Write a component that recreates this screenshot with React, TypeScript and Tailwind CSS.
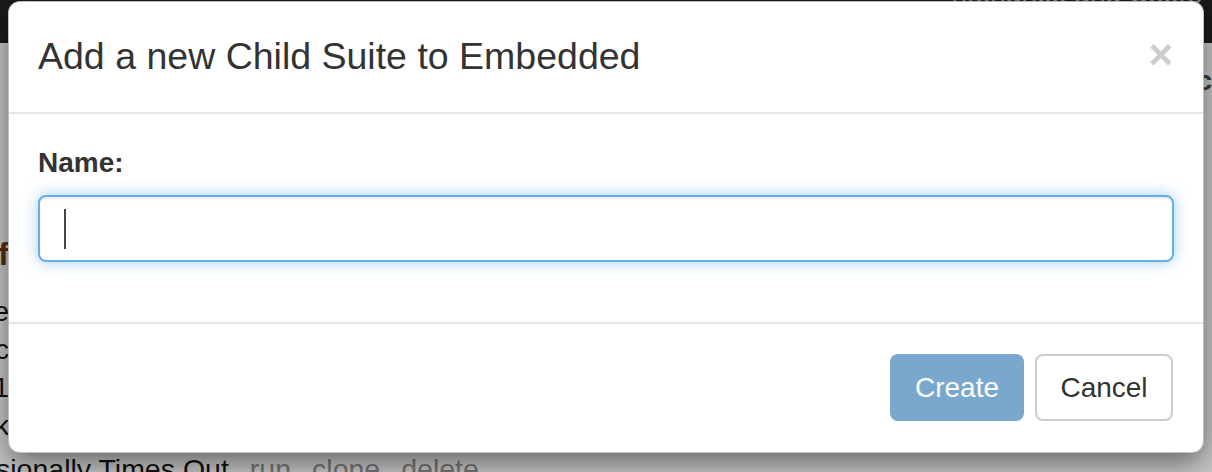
import React from "react";

const font = { fontFamily: '"Liberation Sans", Arial, Helvetica, sans-serif' };

export default function App() {
  return (
    <div
      className="relative w-[1212px] h-[472px] overflow-hidden bg-[#cacaca]"
      style={font}
    >
      {/* page behind the backdrop */}
      <div className="flex h-[43px] justify-end bg-[#1b1b1b] pr-[10px]">
        <div className="-mt-[22px] text-[28px] leading-[32px] text-[#8a8a8a]">
          ntenance and Users
        </div>
      </div>
      <div className="flex flex-col">
        <div className="flex justify-end h-[70px]">
          <div className="mt-[22px] text-[28px] leading-[32px] font-bold text-[#3a3a3a]">c</div>
        </div>
        <div className="-ml-[200px] flex w-[209px] flex-col items-end text-[28px] leading-[38px] text-[#111]">
          <div className="mt-[122px] font-bold text-[#5a2e0c] text-[32px]">of</div>
          <div className="mt-[20px]">me</div>
          <div>ec</div>
          <div>(1</div>
          <div>ek</div>
        </div>
        <div className="mt-[8px] flex items-baseline gap-[21px] whitespace-nowrap text-[28.5px] leading-[32px]">
          <span className="-ml-[4px] text-[#111]">sionally Times Out</span>
          <span className="text-[#777]">run</span>
          <span className="text-[#777]">clone</span>
          <span className="text-[#777]">delete</span>
        </div>
      </div>

      {/* modal */}
      <div className="absolute left-[8px] top-[1px] w-[1196px] rounded-[12px] border border-[rgba(0,0,0,0.25)] bg-white shadow-[0_10px_30px_rgba(0,0,0,0.5)]">
        <div className="flex items-start justify-between border-b-2 border-[#e5e5e5] pl-[29px] pr-[30px] pt-[29px] pb-[30px]">
          <h4 className="text-[37.5px] leading-[51px] font-normal text-[#333]">
            Add a new Child Suite to Embedded
          </h4>
          <button className="mt-[3px] text-[42px] font-bold leading-[42px] text-[#cccccc]">
            ×
          </button>
        </div>
        <div className="px-[29px] pt-[29px] pb-[30px]">
          <div className="mb-[30px]">
            <label className="block mb-[12px] text-[28px] font-bold leading-[40px] text-[#333]">
              Name:
            </label>
            <div className="flex h-[67px] items-center rounded-[8px] border-2 border-[#66afe9] bg-white pl-[24px] shadow-[inset_0_2px_2px_rgba(0,0,0,0.075),0_0_16px_rgba(102,175,233,0.6)]">
              <div className="h-[40px] w-[2px] bg-[#444]" />
            </div>
          </div>
        </div>
        <div className="flex justify-end gap-[11px] border-t-2 border-[#e5e5e5] px-[30px] pt-[30px] pb-[31px]">
          <button className="h-[67px] w-[134px] rounded-[8px] bg-[#7aa7ce] text-[28px] text-white">
            Create
          </button>
          <button className="h-[67px] w-[138px] rounded-[8px] border-2 border-[#cccccc] bg-white text-[28px] text-[#333]">
            Cancel
          </button>
        </div>
      </div>
    </div>
  );
}
